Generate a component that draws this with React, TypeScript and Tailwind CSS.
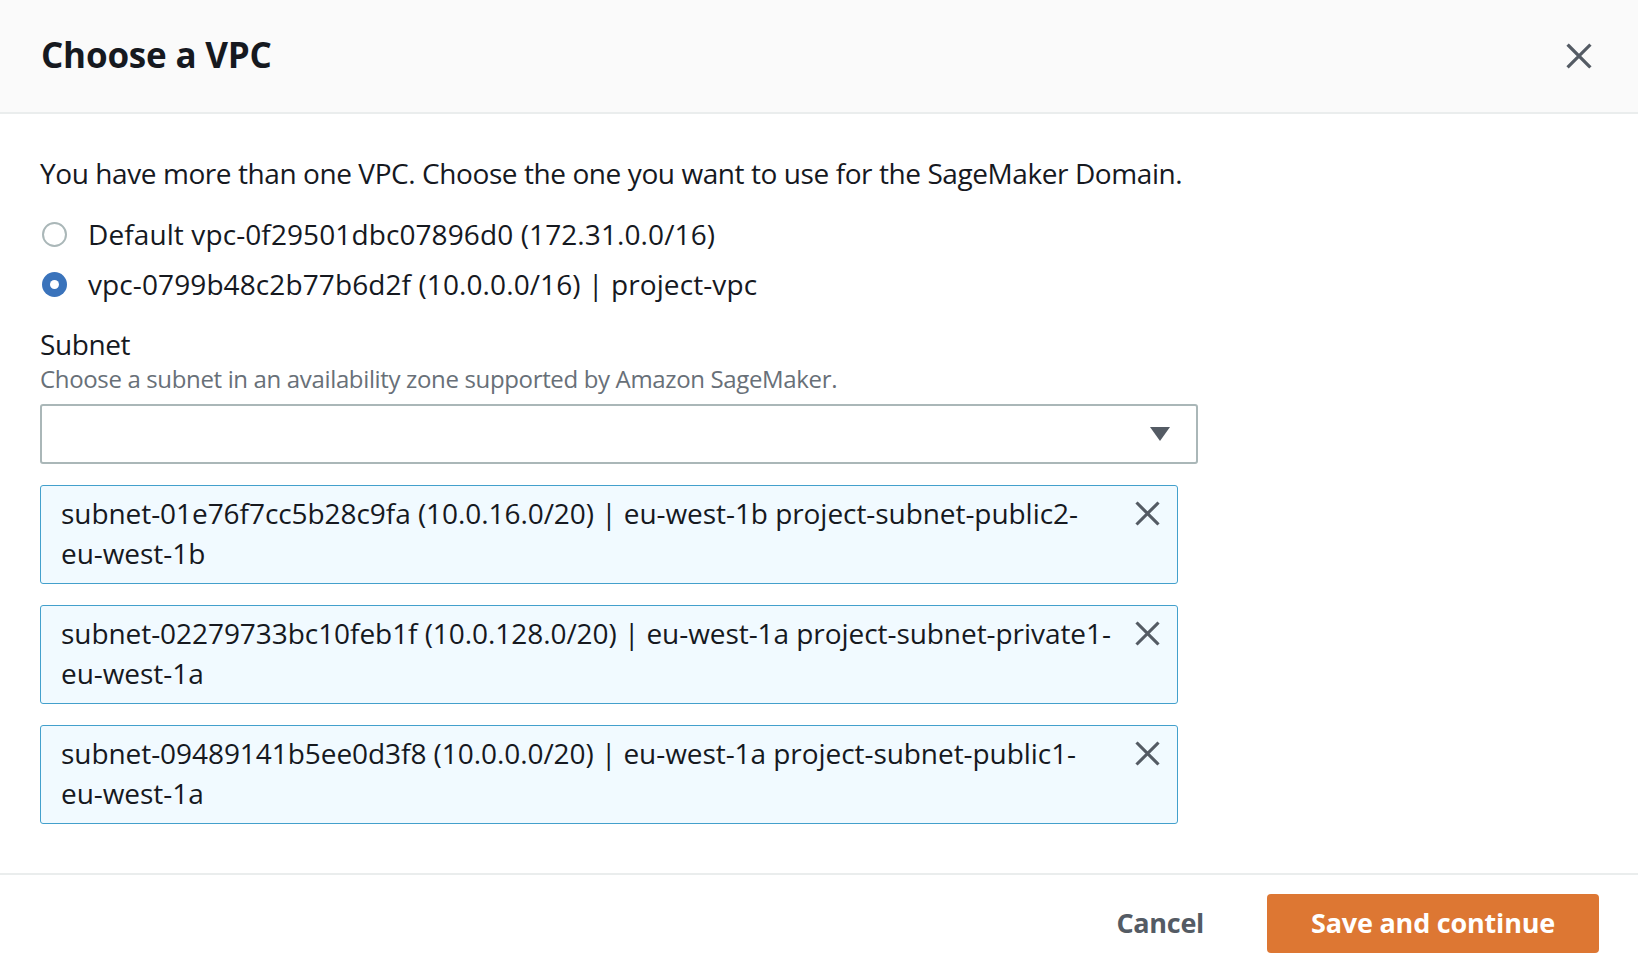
import React from 'react';

const FONT = { fontFamily: '"Open Sans", "Noto Sans", sans-serif' };

const CloseIcon = ({ className, weight = 3 }: { className?: string; weight?: number }) => (
  <svg viewBox="0 0 24 24" className={className} fill="none" stroke="currentColor" strokeWidth={weight} strokeLinecap="square">
    <path d="M2.5 2.5 L21.5 21.5 M21.5 2.5 L2.5 21.5" />
  </svg>
);

const Radio = ({ checked, label }: { checked?: boolean; label: string }) => (
  <label className="flex items-center h-[40px]">
    {checked ? (
      <span className="w-[25px] h-[25px] rounded-full bg-[#3a73bb] flex items-center justify-center shrink-0">
        <span className="w-[9px] h-[9px] rounded-full bg-white" />
      </span>
    ) : (
      <span className="w-[25px] h-[25px] rounded-full border-2 border-[#aab7b8] bg-white shrink-0" />
    )}
    <span className="ml-[21px] tracking-[0.1px]">{label}</span>
  </label>
);

const Token = ({ line1, line2 }: { line1: string; line2: string }) => (
  <div className="w-[1138px] flex items-start border border-[#43a0cc] rounded-[3px] bg-[#f1faff] pl-[20px] pr-[17px] pt-[7px] pb-[10px]">
    <div className="flex-1 leading-[40px] tracking-[-0.06px]">
      <div>{line1}</div>
      <div>{line2}</div>
    </div>
    <button className="mt-[8px] text-[#545b64]">
      <CloseIcon className="w-[25px] h-[25px]" />
    </button>
  </div>
);

export default function App() {
  return (
    <div className="w-[1638px] h-[972px] bg-white text-[#16191f] flex flex-col" style={FONT}>
      {/* header */}
      <div className="h-[114px] bg-[#fafafa] border-b-2 border-[#eaeded] flex items-center justify-between pl-[41px] pr-[46px] shrink-0">
        <h1 className="text-[35px] font-bold tracking-[-0.2px] pb-[2px]">Choose a VPC</h1>
        <button className="text-[#545b64]">
          <CloseIcon className="w-[26px] h-[26px]" />
        </button>
      </div>

      {/* body */}
      <div className="flex-1 pl-[40px] pt-[39px] text-[28px] tracking-[-0.42px]">
        <p className="leading-[40px]">You have more than one VPC. Choose the one you want to use for the SageMaker Domain.</p>

        <div className="mt-[21px] flex flex-col gap-[10px] pl-[2px]">
          <Radio label="Default vpc-0f29501dbc07896d0 (172.31.0.0/16)" />
          <Radio checked label="vpc-0799b48c2b77b6d2f (10.0.0.0/16) | project-vpc" />
        </div>

        <div className="mt-[21px]">
          <div className="leading-[38px]">Subnet</div>
          <div className="text-[24px] leading-[32px] tracking-[-0.35px] text-[#687078]">
            Choose a subnet in an availability zone supported by Amazon SageMaker.
          </div>
        </div>

        <div className="mt-[9px] w-[1158px] h-[60px] border-2 border-[#aab7b8] rounded-[3px] bg-white flex items-center justify-end pr-[26px]">
          <svg viewBox="0 0 20 14" className="w-[20px] h-[14px] text-[#545b64]" fill="currentColor">
            <path d="M0 0 H20 L10 14 Z" />
          </svg>
        </div>

        <div className="mt-[21px] flex flex-col gap-[21px]">
          <Token line1="subnet-01e76f7cc5b28c9fa (10.0.16.0/20) | eu-west-1b project-subnet-public2-" line2="eu-west-1b" />
          <Token line1="subnet-02279733bc10feb1f (10.0.128.0/20) | eu-west-1a project-subnet-private1-" line2="eu-west-1a" />
          <Token line1="subnet-09489141b5ee0d3f8 (10.0.0.0/20) | eu-west-1a project-subnet-public1-" line2="eu-west-1a" />
        </div>
      </div>

      {/* footer */}
      <div className="h-[99px] border-t-2 border-[#eaeded] flex items-center justify-end pr-[39px] shrink-0">
        <button className="text-[27px] font-bold text-[#545b64] tracking-[-0.3px] mr-[63px]">Cancel</button>
        <button className="h-[59px] w-[332px] rounded-[4px] bg-[#dd7733] text-white text-[27px] font-bold tracking-[-0.2px]">
          Save and continue
        </button>
      </div>
    </div>
  );
}
